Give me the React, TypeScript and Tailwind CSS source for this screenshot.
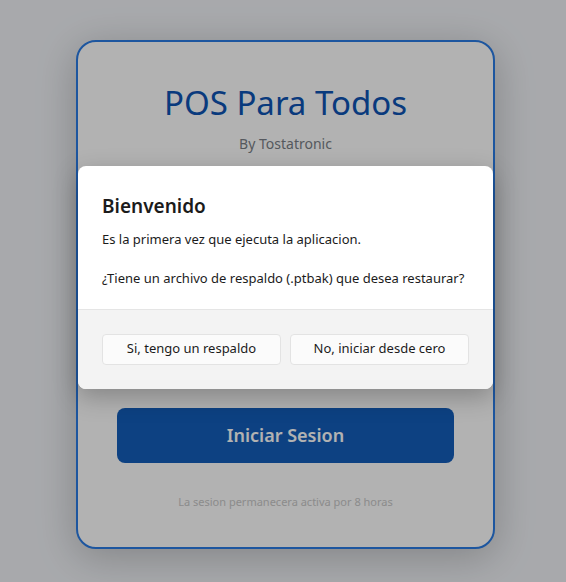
import { useState } from 'react'

export default function App() {
  const [user, setUser] = useState('')
  const [pass, setPass] = useState('')

  return (
    <div
      className="relative min-h-screen w-full bg-[#f1f3f7] flex items-center justify-center pl-[5px] pt-[6px]"
      style={{ fontFamily: '"Noto Sans", "Open Sans", sans-serif' }}
    >
      {/* Login card */}
      <div className="w-[419px] h-[509px] rounded-[20px] border-2 border-[#2a7be4] bg-white shadow-[0_8px_40px_rgba(0,0,0,0.22)] px-[39px] pt-[43px] flex flex-col items-center">
        <h1 className="text-[33px] leading-[36px] text-[#0e53b4]">POS Para Todos</h1>
        <p className="mt-[14px] text-[14px] leading-[18px] text-[#7a7f87]">By Tostatronic</p>

        {/* Hidden below the dialog */}
        <div className="mt-[32px] w-full flex flex-col gap-4">
          <input
            value={user}
            onChange={(e) => setUser(e.target.value)}
            placeholder="Usuario"
            className="h-[48px] w-full rounded-lg border border-gray-300 px-4 text-[15px]"
          />
          <input
            type="password"
            value={pass}
            onChange={(e) => setPass(e.target.value)}
            placeholder="Contrasena"
            className="h-[48px] w-full rounded-lg border border-gray-300 px-4 text-[15px]"
          />
        </div>

        <button
          type="button"
          className="mt-auto w-full h-[55px] rounded-lg bg-[#145ebb] text-white text-[18px] font-semibold"
        >
          Iniciar Sesion
        </button>
        <p className="mt-[32px] mb-[38px] text-[11px] leading-[14px] text-[#c8c8c8]">
          La sesion permanecera activa por 8 horas
        </p>
      </div>

      {/* Overlay */}
      <div className="absolute inset-0 bg-black/30" />

      {/* Dialog */}
      <div className="absolute inset-0 flex items-center justify-center pl-[5px]">
        <div className="mb-[28px] w-[415px] rounded-lg bg-white shadow-[0_8px_24px_rgba(0,0,0,0.25)] overflow-hidden">
          <div className="px-6 pt-[27px] pb-[22px]">
            <h2 className="text-[19px] leading-[26px] font-semibold text-[#1b1b1b]">Bienvenido</h2>
            <p className="mt-[11px] whitespace-nowrap text-[13px] leading-[18px] text-[#1b1b1b]">
              Es la primera vez que ejecuta la aplicacion.
            </p>
            <p className="mt-[21px] whitespace-nowrap text-[13px] leading-[18px] text-[#1b1b1b]">
              ¿Tiene un archivo de respaldo (.ptbak) que desea restaurar?
            </p>
          </div>
          <div className="bg-[#f3f3f3] border-t border-[#e5e5e5] px-6 pt-[24px] pb-[24px] flex gap-[9px]">
            <button
              type="button"
              className="flex-1 h-[31px] rounded-[4px] border border-[#e3e3e3] bg-[#fbfbfb] text-[13px] text-[#1b1b1b]"
            >
              Si, tengo un respaldo
            </button>
            <button
              type="button"
              className="flex-1 h-[31px] rounded-[4px] border border-[#e3e3e3] bg-[#fbfbfb] text-[13px] text-[#1b1b1b]"
            >
              No, iniciar desde cero
            </button>
          </div>
        </div>
      </div>
    </div>
  )
}
